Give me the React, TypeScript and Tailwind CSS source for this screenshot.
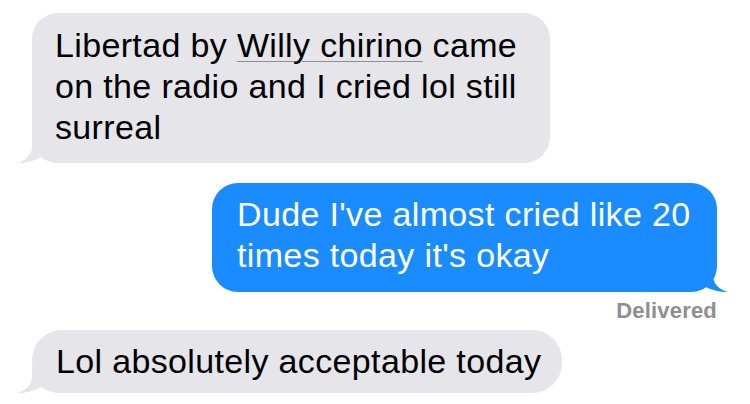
const FONT = { fontFamily: '"Liberation Sans", Arial, sans-serif' };

function TailLeft({ color }: { color: string }) {
  return (
    <svg className="absolute bottom-0 left-[-15px]" width="45" height="25" viewBox="0 0 45 25">
      <path d="M15 0 L15 9 C15 17 8 23 0 25 C9 25 17 23 24 19 C30 23 36 25 45 25 L45 0 Z" fill={color} />
    </svg>
  );
}

function TailRight({ color }: { color: string }) {
  return (
    <svg className="absolute bottom-0 right-[-11px]" width="45" height="25" viewBox="0 0 45 25">
      <path d="M30 0 L30 9 C30 17 37 23 45 25 C36 25 28 23 21 19 C15 23 9 25 0 25 L0 0 Z" fill={color} />
    </svg>
  );
}

export default function App() {
  return (
    <div className="w-[750px] h-[404px] bg-white overflow-hidden flex flex-col" style={FONT}>
      <div className="relative mt-[13px] ml-[32px] w-[518px] h-[150px] bg-[#e5e5ea] rounded-[26px] pl-[23px] pt-[12px] text-[34px] leading-[41px] tracking-[0.35px] text-black">
        <TailLeft color="#e5e5ea" />
        <p className="relative">
          Libertad by <span className="underline decoration-[#8e8e93] decoration-1 underline-offset-[4px]">Willy chirino</span> came on the radio and I cried lol still surreal
        </p>
      </div>
      <div className="relative mt-[20px] self-end mr-[33px] w-[505px] h-[109px] bg-[#1a8cff] rounded-[26px] pl-[25px] pt-[11px] text-[34px] leading-[41px] tracking-[0.35px] text-white">
        <TailRight color="#1a8cff" />
        <p className="relative">Dude I've almost cried like 20 times today it's okay</p>
      </div>
      <div className="self-end mr-[33px] mt-[8px] text-[22px] leading-[22px] font-bold tracking-[0.2px] text-[#8e8e93]">Delivered</div>
      <div className="relative mt-[8px] ml-[32px] w-[530px] h-[63px] bg-[#e5e5ea] rounded-[30px] pl-[24px] pt-[11px] text-[34px] leading-[41px] tracking-[0.35px] text-black">
        <TailLeft color="#e5e5ea" />
        <p className="relative">Lol absolutely acceptable today</p>
      </div>
    </div>
  );
}
